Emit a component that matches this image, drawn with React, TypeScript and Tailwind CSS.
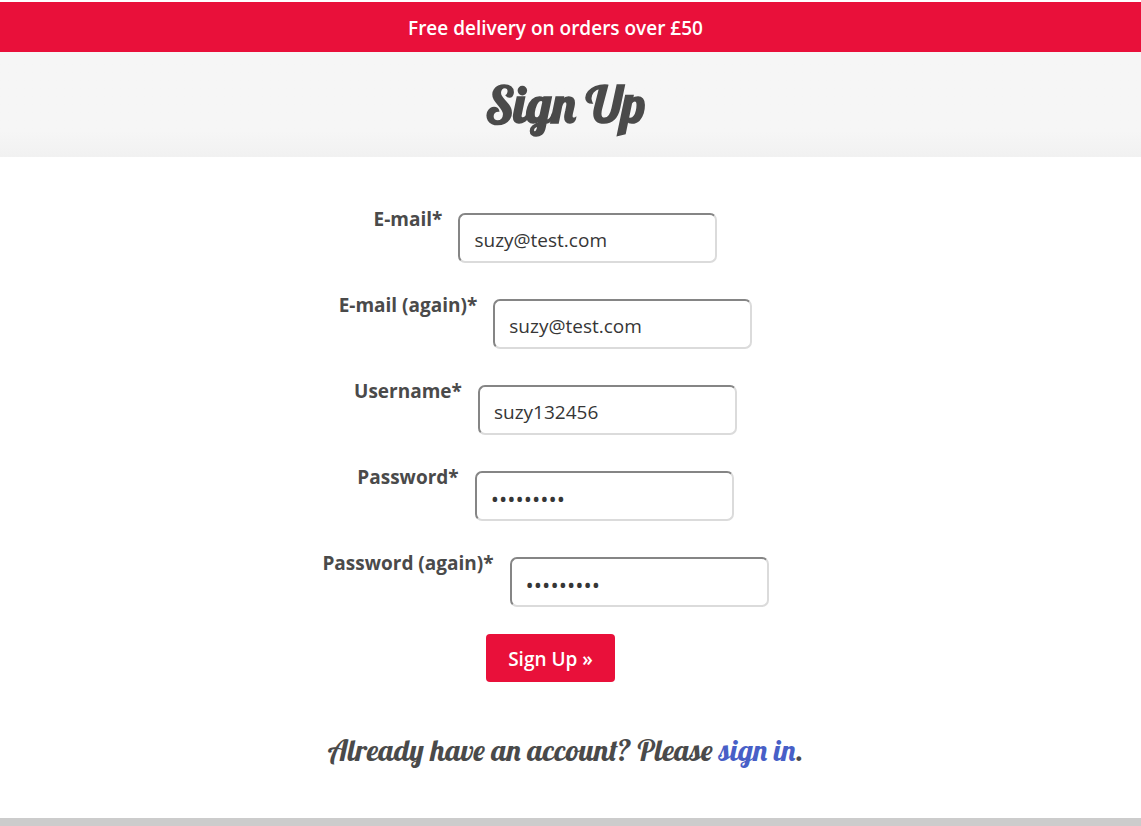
import React from "react";

type FieldProps = { id: string; label: string; type: string; value: string };

function Field({ id, label, type, value }: FieldProps) {
  return (
    <div className="flex items-start justify-center gap-4">
      <label htmlFor={id} className="-mt-2 text-[19px] leading-7 font-bold text-[#4a4a4a]">
        {label}*
      </label>
      <input
        id={id}
        type={type}
        defaultValue={value}
        className={
          "h-[50px] w-[259px] rounded-[7px] border-2 border-t-[#858585] border-r-[#dbdbdb] border-b-[#dbdbdb] border-l-[#858585] bg-white px-3.5 pt-1 text-[#363636] outline-none " +
          (type === "password" ? "text-[22px]" : "text-[19px]")
        }
      />
    </div>
  );
}

const fields: FieldProps[] = [
  { id: "email", label: "E-mail", type: "email", value: "suzy@test.com" },
  { id: "email2", label: "E-mail (again)", type: "email", value: "suzy@test.com" },
  { id: "username", label: "Username", type: "text", value: "suzy132456" },
  { id: "password1", label: "Password", type: "password", value: "suzytest1" },
  { id: "password2", label: "Password (again)", type: "password", value: "suzytest1" },
];

export default function App() {
  return (
    <div className="bg-white pt-0.5 font-['Open_Sans',sans-serif] text-[#4a4a4a]">
      <p className="flex h-[50px] items-center justify-center bg-[#e9103a] pt-0.5 pr-[30px] text-[19px] font-semibold text-white">
        Free delivery on orders over £50
      </p>
      <header className="flex h-[105px] items-center justify-center bg-linear-to-b from-[#f6f6f6] from-75% to-[#f1f1f1] pr-2.5">
        <h1 className="font-['Lobster','Liberation_Serif',serif] text-[50px] font-bold">Sign Up</h1>
      </header>
      <form className="flex flex-col gap-9 pt-14 pr-[50px]" onSubmit={(e) => e.preventDefault()}>
        {fields.map((f) => (
          <Field key={f.id} {...f} />
        ))}
        <button type="submit" className="-mt-[9px] ml-2.5 h-12 self-center rounded bg-[#e9103a] px-[22px] pt-0.5 text-[19px] font-semibold text-white">
          Sign Up »
        </button>
      </form>
      <p className="mt-12 mb-12 pr-2.5 text-center font-['Lobster','Liberation_Serif',serif] text-[30px] leading-10">
        Already have an account? Please <a href="#signin" className="text-[#485fc7]">sign in</a>.
      </p>
      <footer className="h-2 bg-[#cccccc]" />
    </div>
  );
}
